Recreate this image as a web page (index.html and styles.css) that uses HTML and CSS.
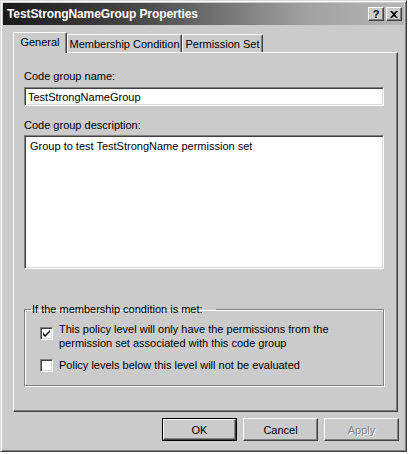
FILE: index.html
```html
<!DOCTYPE html>
<html>
<head>
<meta charset="utf-8">
<title>TestStrongNameGroup Properties</title>
<link rel="stylesheet" href="styles.css">
</head>
<body>
<div class="window">
  <div class="titlebar">
    <span class="title">TestStrongNameGroup Properties</span>
    <div class="tbtns">
      <span class="tbtn help">?</span>
      <span class="tbtn close"><svg width="8" height="7" viewBox="0 0 8 7"><path d="M0 0h2l2 2 2-2h2L5 3.5 8 7H6L4 5 2 7H0l3-3.5z" fill="#000"/></svg></span>
    </div>
  </div>
  <div class="tabs">
    <div class="tab active">General</div>
    <div class="tab">Membership Condition</div>
    <div class="tab">Permission Set</div>
  </div>
  <div class="panel">
    <div class="label">Code group name:</div>
    <input class="field" type="text" value="TestStrongNameGroup" readonly>
    <div class="label label2">Code group description:</div>
    <textarea class="area" readonly>Group to test TestStrongName permission set</textarea>
    <fieldset class="group">
      <legend>If the membership condition is met:</legend>
      <div class="check multi">
        <span class="box"><svg width="7" height="7" viewBox="0 0 7 7"><path d="M0 2v3l2 2 5-5V-0L2 5z" fill="#000"/></svg></span>
        <span class="ctext">This policy level will only have the permissions from the<br>permission set associated with this code group</span>
      </div>
      <div class="check single">
        <span class="box"></span>
        <span class="ctext">Policy levels below this level will not be evaluated</span>
      </div>
    </fieldset>
  </div>
  <div class="buttons">
    <div class="btn default"><span class="btn-in">OK</span></div>
    <div class="btn"><span class="btn-in">Cancel</span></div>
    <div class="btn disabled"><span class="btn-in">Apply</span></div>
  </div>
</div>
</body>
</html>
```
FILE: styles.css
```css
html, body {
  margin: 0;
  padding: 0;
  background: #ffffff;
}
body {
  font-family: "Liberation Sans", Arial, sans-serif;
  font-size: 11px;
  color: #000;
}
.window {
  width: 407px;
  height: 452px;
  box-sizing: border-box;
  background: #cbcbcb;
  border: 1px solid;
  border-color: #d8d8d8 #404040 #404040 #d8d8d8;
  box-shadow: inset 1px 1px #ffffff, inset -1px -1px #808080;
  padding: 2px;
  display: flex;
  flex-direction: column;
}
.titlebar {
  height: 22px;
  flex: none;
  display: flex;
  align-items: center;
  justify-content: space-between;
  background: linear-gradient(90deg, #1a1a1a 0%, #4a4a4a 35%, #a0a0a0 75%, #b6b6b6 100%);
  padding: 0 2px 0 4px;
}
.title {
  color: #fff;
  font-weight: bold;
  font-size: 12px;
  letter-spacing: -0.1px;
}
.tbtns {
  display: flex;
  gap: 2px;
}
.tbtn {
  width: 16px;
  height: 14px;
  box-sizing: border-box;
  background: #cbcbcb;
  border: 1px solid;
  border-color: #fff #404040 #404040 #fff;
  box-shadow: inset -1px -1px #808080;
  display: flex;
  align-items: center;
  justify-content: center;
  font-weight: bold;
  font-size: 11px;
  line-height: 1;
}
.tabs {
  margin: 7px 0 0 10px;
  height: 21px;
  display: flex;
  align-items: flex-end;
  position: relative;
  z-index: 2;
}
.tab {
  height: 18px;
  box-sizing: border-box;
  margin-bottom: 1px;
  border-top: 1px solid #fff;
  border-left: 1px solid #fff;
  border-right: 1px solid #404040;
  box-shadow: inset -1px 0 #808080;
  border-radius: 2px 2px 0 0;
  padding: 3px 0 0 0;
  line-height: 13px;
  white-space: nowrap;
  text-align: center;
  background: #cbcbcb;
}
.tab.active {
  height: 21px;
  margin-bottom: 0;
  padding-top: 3px;
  width: 54px;
}
.tab:nth-child(2) { width: 115px; }
.tab:nth-child(3) { width: 81px; }
.panel {
  margin: -1px 6px 0 10px;
  height: 360px;
  box-sizing: border-box;
  border: 1px solid;
  border-color: #fff #404040 #404040 #fff;
  box-shadow: inset -1px -1px #808080;
  padding: 17px 13px 0 10px;
  display: flex;
  flex-direction: column;
  position: relative;
  z-index: 1;
}
.label {
  line-height: 13px;
  height: 13px;
}
.label2 {
  margin-top: 13px;
}
.field, .area {
  font-family: "Liberation Sans", Arial, sans-serif;
  font-size: 11px;
  color: #000;
  background: #fff;
  box-sizing: border-box;
  border: 1px solid;
  border-color: #808080 #fff #fff #808080;
  box-shadow: inset 1px 1px #404040, inset -1px -1px #d8d8d8;
  outline: none;
  margin: 0;
  width: 100%;
}
.field {
  height: 19px;
  margin-top: 4px;
  padding: 0 3px;
}
.area {
  margin-top: 3px;
  height: 134px;
  resize: none;
  padding: 4px 5px;
  line-height: 13px;
  overflow: hidden;
}
.group {
  margin: 34px 0 0 0;
  padding: 0 0 0 15px;
  height: 83px;
  box-sizing: border-box;
  border: 1px solid #808080;
  box-shadow: inset 1px 1px #fff, 1px 1px #fff;
  min-width: 0;
}
.group legend {
  width: 185px;
  box-sizing: border-box;
  padding: 0 0 0 1px;
  margin-left: -9px;
  line-height: 13px;
}
.check {
  display: flex;
  align-items: center;
  gap: 6px;
}
.check.multi {
  margin-top: 6px;
  align-items: flex-start;
}
.check.multi .box {
  margin-top: 5px;
}
.check.single {
  margin-top: 8px;
}
.ctext {
  line-height: 14px;
}
.box {
  width: 13px;
  height: 13px;
  flex: none;
  box-sizing: border-box;
  background: #fff;
  border: 1px solid;
  border-color: #808080 #fff #fff #808080;
  box-shadow: inset 1px 1px #404040, inset -1px -1px #d8d8d8;
  display: flex;
  align-items: center;
  justify-content: center;
}
.buttons {
  margin: 6px 5px 0 0;
  display: flex;
  justify-content: flex-end;
  gap: 6px;
}
.btn {
  width: 75px;
  height: 23px;
  box-sizing: border-box;
  display: flex;
}
.btn-in {
  flex: 1;
  display: flex;
  align-items: center;
  justify-content: center;
  border: 1px solid;
  border-color: #fff #404040 #404040 #fff;
  box-shadow: inset -1px -1px #808080;
  background: #cbcbcb;
}
.btn.default {
  border: 1px solid #000;
}
.btn.disabled .btn-in {
  color: #808080;
  text-shadow: 1px 1px #fff;
}
```
